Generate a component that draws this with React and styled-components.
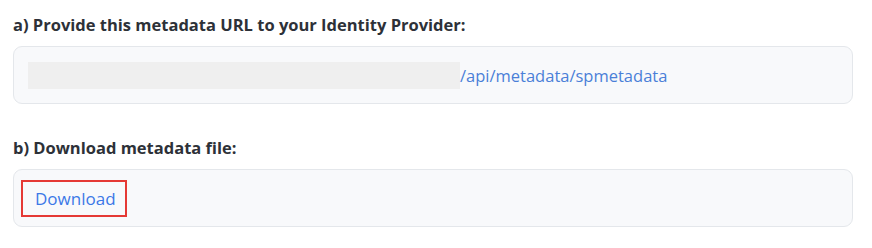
import React from "react";
import styled, { createGlobalStyle } from "styled-components";

const GlobalStyle = createGlobalStyle`
  body {
    margin: 0;
    background: #ffffff;
    font-family: "Open Sans", "Noto Sans", sans-serif;
  }
`;

const Page = styled.div({
  padding: "12px 19px 0 13px",
  display: "flex",
  flexDirection: "column"
});

const Section = styled.section({
  display: "flex",
  flexDirection: "column",
  marginBottom: "31px"
});

const Label = styled.h4({
  margin: "0 0 8px",
  fontSize: "16.5px",
  fontWeight: 700,
  color: "#2d3138",
  lineHeight: "26px"
});

const Well = styled.div({
  boxSizing: "border-box",
  height: "58px",
  display: "flex",
  alignItems: "center",
  padding: "0 14px",
  background: "#f8f9fb",
  border: "1px solid #e4e7eb",
  borderRadius: "9px"
});

const Masked = styled.span({
  display: "inline-block",
  width: "432px",
  height: "27px",
  background: "#efefef"
});

const UrlText = styled.span({
  fontSize: "16.5px",
  color: "#4a7fd8"
});

const DownloadLink = styled.a({
  display: "inline-flex",
  alignItems: "center",
  marginLeft: "-7px",
  padding: "0 9px 0 12px",
  height: "37px",
  boxSizing: "border-box",
  border: "2px solid #e53935",
  fontSize: "17px",
  color: "#3b78e7",
  textDecoration: "none",
  cursor: "pointer"
});

function App() {
  return (
    <>
      <GlobalStyle />
      <Page>
        <Section>
          <Label>a) Provide this metadata URL to your Identity Provider:</Label>
          <Well>
            <Masked />
            <UrlText>/api/metadata/spmetadata</UrlText>
          </Well>
        </Section>
        <Section>
          <Label>b) Download metadata file:</Label>
          <Well>
            <DownloadLink href="#">Download</DownloadLink>
          </Well>
        </Section>
      </Page>
    </>
  );
}

export default App;
